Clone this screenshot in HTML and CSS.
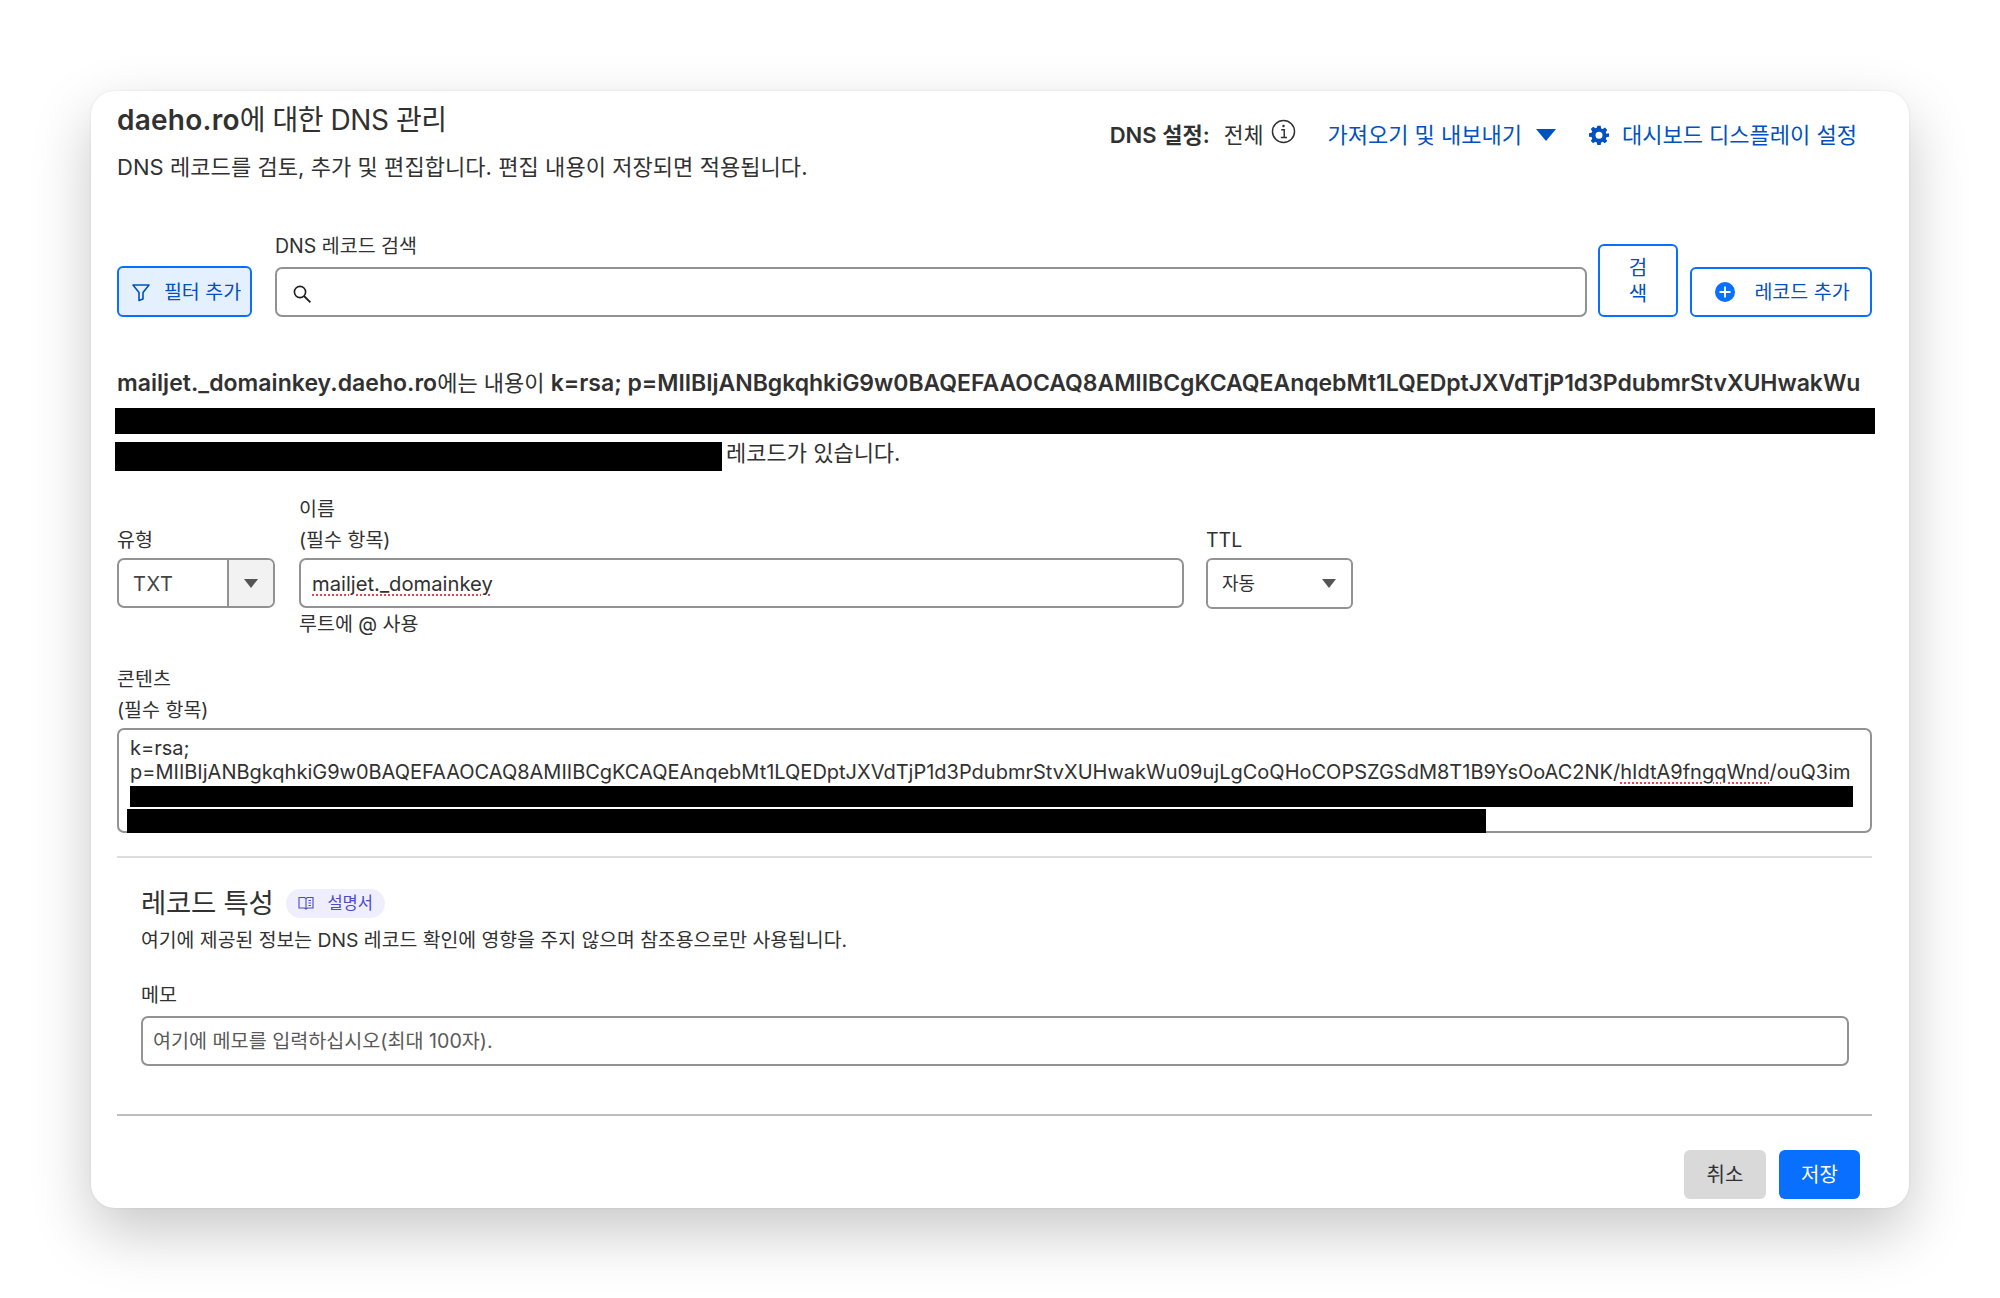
FILE: index.html
```html
<!DOCTYPE html>
<html lang="ko">
<head>
<meta charset="utf-8">
<title>DNS 관리</title>
<link rel="stylesheet" href="styles.css">
</head>
<body>
<main class="card">
  <header class="head">
    <div class="head-left">
      <h1 class="title"><b>daeho.ro</b>에 대한 DNS 관리</h1>
      <p class="sub">DNS 레코드를 검토, 추가 및 편집합니다. 편집 내용이 저장되면 적용됩니다.</p>
    </div>
    <div class="head-right">
      <span class="setting"><b>DNS 설정:</b> <span class="setting-val">전체</span></span>
      <svg class="info" viewBox="0 0 24 24" width="25" height="25"><circle cx="12" cy="12" r="10.6" fill="none" stroke="#313131" stroke-width="1.4"/><circle cx="12" cy="6.8" r="1.2" fill="#313131"/><path d="M9.8 10.4h2.9v7.2M9.4 17.8h6" fill="none" stroke="#313131" stroke-width="1.4"/></svg>
      <a class="link import">가져오기 및 내보내기<svg class="caret" viewBox="0 0 20 12" width="20" height="12"><path d="M0 0h20L10 12z" fill="#0051c3"/></svg></a>
      <a class="link dash"><svg class="gear" viewBox="0 0 24 24" width="20" height="20"><path fill="#0051c3" fill-rule="evenodd" d="M10 1h4l.6 3.1 1.9.8 2.7-1.8 2.7 2.9-1.8 2.6.8 1.9L24 10v4l-3.1.6-.8 1.9 1.8 2.7-2.9 2.7-2.6-1.8-1.9.8L14 24h-4l-.6-3.1-1.9-.8-2.7 1.8-2.7-2.9 1.8-2.6-.8-1.9L0 14v-4l3.1-.6.8-1.9-1.8-2.7 2.9-2.7 2.6 1.8 1.9-.8zM12 8a4.2 4.2 0 1 0 0 8.4A4.2 4.2 0 0 0 12 8z"/></svg>대시보드 디스플레이 설정</a>
    </div>
  </header>

  <section class="searchbar">
    <button class="btn filter"><svg viewBox="0 0 20 20" width="20" height="20"><path d="M2 3h16l-6 7.5V17l-4 1.5v-8z" fill="none" stroke="#0051c3" stroke-width="1.6" stroke-linejoin="round"/></svg>필터 추가</button>
    <div class="searchfield">
      <label class="label">DNS 레코드 검색</label>
      <div class="input search-input"><svg viewBox="0 0 20 20" width="20" height="20"><circle cx="8" cy="8" r="5.6" fill="none" stroke="#1d1d1d" stroke-width="1.6"/><path d="M12 12l6.4 6.4" stroke="#1d1d1d" stroke-width="1.8"/></svg></div>
    </div>
    <button class="btn outline search-btn">검<br>색</button>
    <button class="btn outline add-btn"><svg viewBox="0 0 20 20" width="20" height="20"><circle cx="10" cy="10" r="10" fill="#086fff"/><path d="M10 4.5v11M4.5 10h11" stroke="#fff" stroke-width="1.8"/></svg>레코드 추가</button>
  </section>

  <section class="notice">
    <p class="notice-line"><b class="host">mailjet._domainkey.daeho.ro</b>에는 내용이 <b class="key">k=rsa; p=MIIBIjANBgkqhkiG9w0BAQEFAAOCAQ8AMIIBCgKCAQEAnqebMt1LQEDptJXVdTjP1d3PdubmrStvXUHwakWu</b></p>
    <div class="redact r1"></div>
    <div class="notice-end"><div class="redact r2"></div><span class="notice-tail">레코드가 있습니다.</span></div>
  </section>

  <section class="fields">
    <div class="field f-type">
      <label class="label">유형</label>
      <div class="select-combo"><span class="combo-val">TXT</span><span class="combo-arrow"><svg viewBox="0 0 14 9" width="14" height="9"><path d="M0 0h14L7 9z" fill="#555"/></svg></span></div>
    </div>
    <div class="field f-name">
      <label class="label">이름<br>(필수 항목)</label>
      <div class="input name-input"><span class="spell">mailjet._domainkey</span></div>
      <div class="hint">루트에 @ 사용</div>
    </div>
    <div class="field f-ttl">
      <label class="label">TTL</label>
      <div class="select-ttl"><span class="ttl-val">자동</span><svg viewBox="0 0 14 9" width="14" height="9"><path d="M0 0h14L7 9z" fill="#555"/></svg></div>
    </div>
  </section>

  <section class="content-field">
    <label class="label">콘텐츠<br>(필수 항목)</label>
    <div class="textarea">
      <div class="ta-text">k=rsa;<br>p=MIIBIjANBgkqhkiG9w0BAQEFAAOCAQ8AMIIBCgKCAQEAnqebMt1LQEDptJXVdTjP1d3PdubmrStvXUHwakWu09ujLgCoQHoCOPSZGSdM8T1B9YsOoAC2NK/<span class="spell">hIdtA9fngqWnd</span>/ouQ3im</div>
      <div class="redact r3"></div>
      <div class="redact r4"></div>
    </div>
  </section>

  <hr class="rule rule-a">

  <section class="attrs">
    <div class="attrs-head"><h2 class="attrs-title">레코드 특성</h2><a class="pill"><svg viewBox="0 0 16 14" width="16" height="14"><path d="M1 1.5h5.5L8 2.5l1.5-1H15V12H9.5L8 13l-1.5-1H1zM8 2.5V13M10.5 4.5H13M10.5 7H13M10.5 9.5H13" fill="none" stroke="#4b4bc8" stroke-width="1.1"/></svg>설명서</a></div>
    <p class="attrs-desc">여기에 제공된 정보는 DNS 레코드 확인에 영향을 주지 않으며 참조용으로만 사용됩니다.</p>
    <label class="label memo-label">메모</label>
    <div class="input memo-input">여기에 메모를 입력하십시오(최대 100자).</div>
  </section>

  <hr class="rule rule-b">

  <footer class="actions">
    <button class="btn cancel">취소</button>
    <button class="btn save">저장</button>
  </footer>
</main>
</body>
</html>
```
FILE: styles.css
```css
* { box-sizing: border-box; }
html, body { margin: 0; background: #fff; }
body {
  width: 2000px;
  height: 1298px;
  padding: 91px 91px 0;
  overflow: hidden;
  font-family: Inter, "Noto Sans CJK KR", sans-serif;
  color: #313131;
  font-size: 20px;
  line-height: 30px;
}
.card {
  width: 1818px;
  height: 1117px;
  padding: 0 37px 0 26px;
  background: #fff;
  border-radius: 24px;
  box-shadow: 0 0 3px rgba(0,0,0,.08), 0 24px 60px rgba(0,0,0,.22);
}
b { font-weight: 600; }
p, h1, h2 { margin: 0; font-weight: 400; }
.label { display: block; font-size: 19.5px; line-height: 31px; }

.head { display: flex; justify-content: space-between; height: 153px; }
.head-left { padding-top: 10px; }
.title { font-size: 28px; line-height: 38px; letter-spacing: -.45px; }
.title b { letter-spacing: .25px; }
.sub { margin-top: 10px; font-size: 22px; line-height: 36px; letter-spacing: .06px; }
.head-right { display: flex; align-items: center; height: 85px; padding-top: 2px; padding-right: 15px; font-size: 22px; }
.setting b { margin-right: 8px; }
.setting-val { font-size: 21.5px; }
.info { margin: -6px 0 0 8px; }
.link { color: #0051c3; display: flex; align-items: center; }
.import { margin-left: 31px; }
.caret { margin-left: 14px; }
.dash { margin-left: 33px; }
.gear { margin-right: 13px; }

.searchbar { display: flex; align-items: flex-end; height: 73px; }
.btn { font: inherit; border-radius: 6px; cursor: pointer; }
.filter {
  display: flex; align-items: center; justify-content: center; gap: 13px;
  width: 135px; height: 51px; padding: 0 0 0 3px;
  border: 2px solid #086fff; background: #e5f0ff; color: #0051c3; font-size: 19.5px;
}
.searchfield { width: 1312px; margin-left: 23px; }
.searchfield .label { margin-bottom: 5px; }
.input { border: 2px solid #929292; border-radius: 7px; background: #fff; display: flex; align-items: center; }
.search-input { height: 50px; padding: 3px 0 0 15px; }
.outline { border: 2px solid #086fff; background: #fff; color: #0051c3; }
.search-btn { width: 80px; height: 73px; margin-left: 11px; line-height: 26px; padding: 0; }
.add-btn {
  display: flex; align-items: center; justify-content: center; gap: 19px;
  width: 182px; height: 50px; margin-left: 12px; padding: 0 0 0 3px; font-size: 19.5px;
}

.notice { margin-top: 42px; font-size: 22px; }
.notice-line { height: 49px; line-height: 48px; white-space: nowrap; }
.notice-line b { font-size: 23px; }
.host { letter-spacing: .04px; }
.key { letter-spacing: -.03px; }
.redact { background: #000; }
.r1 { width: 1760px; height: 26px; margin-left: -2px; }
.notice-end { display: flex; align-items: flex-start; height: 29px; margin-top: 8px; margin-left: -2px; }
.r2 { width: 607px; height: 29px; margin-right: 4px; }
.notice-tail { line-height: 22px; }

.fields { display: flex; align-items: flex-start; margin-top: 23px; height: 170px; }
.field { display: flex; flex-direction: column; justify-content: flex-end; }
.f-type { width: 158px; height: 114px; }
.f-name { width: 885px; margin-left: 24px; }
.f-ttl { width: 147px; height: 115px; margin-left: 22px; }
.f-name .label { margin-bottom: 2px; }
.f-type .label, .f-ttl .label { margin-bottom: 2px; }
.select-combo { display: flex; height: 50px; border: 2px solid #929292; border-radius: 7px; overflow: hidden; }
.combo-val { width: 110px; padding: 1px 0 0 14px; line-height: 46px; border-right: 2px solid #929292; letter-spacing: .6px; color: #444; }
.combo-arrow { flex: 1; display: flex; align-items: center; justify-content: center; background: #f2f2f2; }
.name-input { height: 50px; padding: 2px 0 0 11px; font-size: 20.2px; }
.spell { text-decoration: underline dotted #e8464a 2px; text-underline-offset: 3px; }
.hint { font-size: 19.5px; line-height: 30px; margin-top: 1px; }
.select-ttl { display: flex; justify-content: space-between; align-items: center; height: 51px; padding: 0 15px 0 14px; border: 2px solid #929292; border-radius: 6px; font-size: 18px; }
.ttl-val { padding-top: 1px; }

.textarea { height: 105px; margin-top: 2px; border: 2px solid #929292; border-radius: 7px; padding: 6px 0 0 11px; font-size: 20px; line-height: 24px; position: relative; }
.ta-text { white-space: nowrap; }
.r3 { position: absolute; left: 11px; top: 56px; width: 1723px; height: 21px; }
.r4 { position: absolute; left: 8px; top: 79px; width: 1359px; height: 24px; }

.rule { margin: 0; border: 0; border-top: 2px solid #dcdcdc; }
.rule-a { margin-top: 23px; }
.attrs { padding: 0 23px 0 24px; }
.attrs-head { display: flex; align-items: center; margin-top: 30px; height: 31px; }
.attrs-title { font-size: 27.5px; line-height: 31px; letter-spacing: -.3px; }
.pill { display: flex; align-items: center; gap: 13px; height: 29px; margin-left: 13px; padding: 0 12px 1px; border-radius: 15px; background: #efeeff; color: #4b4bc8; font-size: 16.5px; }
.attrs-desc { margin-top: 4px; font-size: 19.35px; line-height: 34px; }
.memo-label { margin-top: 23px; line-height: 30px; }
.memo-input { margin-top: 6px; height: 50px; padding-left: 10px; color: #595959; font-size: 19.6px; }
.rule-b { margin-top: 48px; border-top-color: #bdbdbd; }
.actions { display: flex; justify-content: flex-end; gap: 13px; margin-top: 34px; padding-right: 12px; }
.cancel, .save { height: 49px; padding: 0; border: 0; font-size: 20px; }
.cancel { width: 82px; background: #d9d9d9; color: #313131; }
.save { width: 81px; background: #086fff; color: #fff; }
```
